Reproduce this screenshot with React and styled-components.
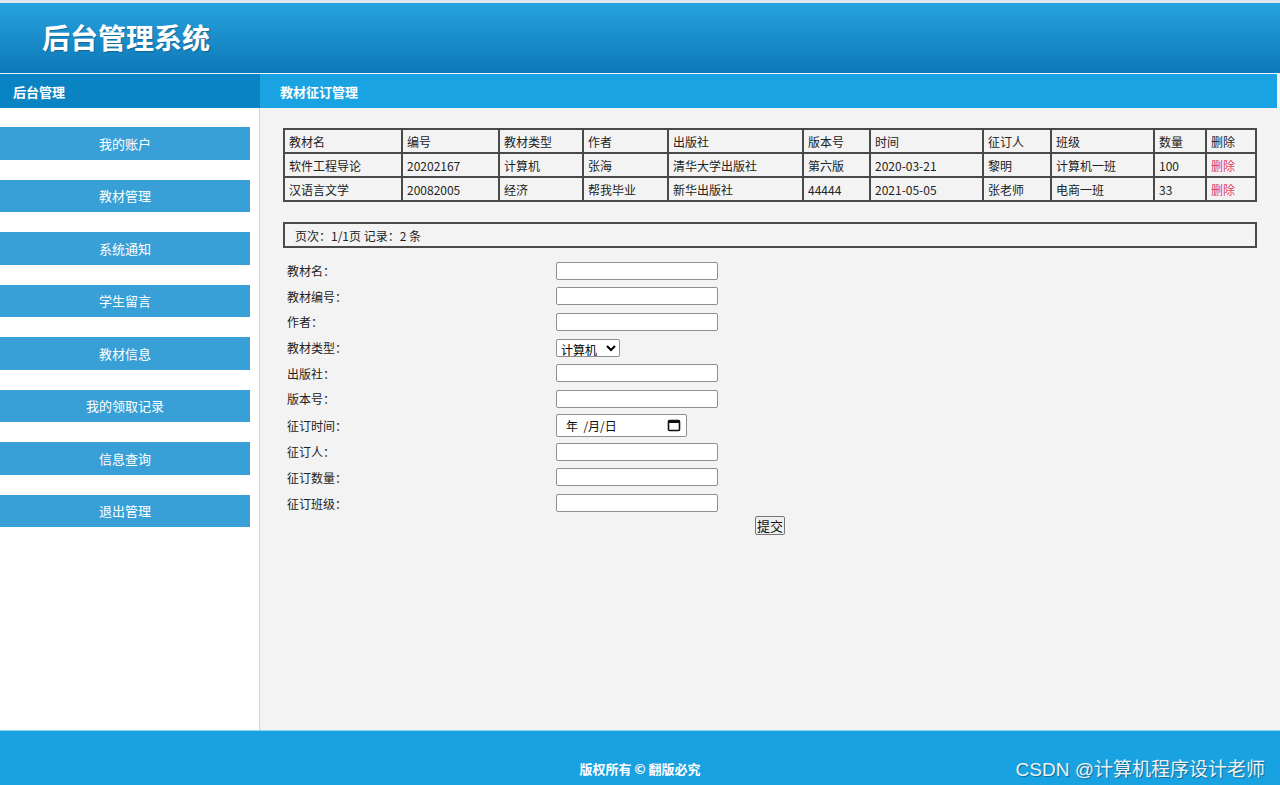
import React from "react";
import styled, { createGlobalStyle } from "styled-components";

const GlobalStyle = createGlobalStyle`
  body {
    margin: 0;
    font-family: "Noto Sans CJK SC", "Liberation Sans", sans-serif;
    background: #f3f3f3;
  }
`;

const menus = ["我的账户", "教材管理", "系统通知", "学生留言", "教材信息", "我的领取记录", "信息查询", "退出管理"];

const columns = [
  { title: "教材名", width: 118 },
  { title: "编号", width: 97 },
  { title: "教材类型", width: 84 },
  { title: "作者", width: 85 },
  { title: "出版社", width: 135 },
  { title: "版本号", width: 67 },
  { title: "时间", width: 113 },
  { title: "征订人", width: 68 },
  { title: "班级", width: 103 },
  { title: "数量", width: 52 },
  { title: "删除", width: 50 }
];

const rows = [
  ["软件工程导论", "20202167", "计算机", "张海", "清华大学出版社", "第六版", "2020-03-21", "黎明", "计算机一班", "100"],
  ["汉语言文学", "20082005", "经济", "帮我毕业", "新华出版社", "44444", "2021-05-05", "张老师", "电商一班", "33"]
];

const fields = [
  { label: "教材名：", type: "text" },
  { label: "教材编号：", type: "text" },
  { label: "作者：", type: "text" },
  { label: "教材类型：", type: "select" },
  { label: "出版社：", type: "text" },
  { label: "版本号：", type: "text" },
  { label: "征订时间：", type: "date" },
  { label: "征订人：", type: "text" },
  { label: "征订数量：", type: "text" },
  { label: "征订班级：", type: "text" }
];

const CalendarIcon = () => (
  <svg width="14" height="14" viewBox="0 0 14 14">
    <rect x="1.5" y="2.5" width="11" height="10" rx="1" fill="none" stroke="#111" strokeWidth="1.6" />
    <rect x="1.5" y="2.5" width="11" height="2.5" fill="#111" />
  </svg>
);

const App = () => {
  return (
    <Page>
      <GlobalStyle />
      <TopStrip />
      <Header>
        <Title>后台管理系统</Title>
      </Header>
      <SubBar>
        <SubLeft>后台管理</SubLeft>
        <SubRight>教材征订管理</SubRight>
      </SubBar>
      <Main>
        <Sidebar>
          {menus.map((m) => (
            <NavButton key={m}>{m}</NavButton>
          ))}
        </Sidebar>
        <Content>
          <DataTable>
            <colgroup>
              {columns.map((c) => (
                <col key={c.title} style={{ width: c.width }} />
              ))}
            </colgroup>
            <tbody>
              <tr>
                {columns.map((c) => (
                  <Cell key={c.title}>{c.title}</Cell>
                ))}
              </tr>
              {rows.map((r) => (
                <tr key={r[1]}>
                  {r.map((v, i) => (
                    <Cell key={i}>{v}</Cell>
                  ))}
                  <Cell>
                    <DeleteLink>删除</DeleteLink>
                  </Cell>
                </tr>
              ))}
            </tbody>
          </DataTable>
          <Pager>页次：1/1页 记录：2 条</Pager>
          <FormTable>
            <tbody>
              {fields.map((f) => (
                <FormRow key={f.label} $tall={f.type === "date"}>
                  <LabelCell>{f.label}</LabelCell>
                  <InputCell>
                    {f.type === "text" && <TextInput type="text" />}
                    {f.type === "select" && (
                      <Select defaultValue="计算机">
                        <option value="计算机">计算机</option>
                        <option value="经济">经济</option>
                      </Select>
                    )}
                    {f.type === "date" && (
                      <DateBox>
                        <span>年&nbsp;&nbsp;/月/日</span>
                        <CalendarIcon />
                      </DateBox>
                    )}
                  </InputCell>
                </FormRow>
              ))}
              <tr>
                <SubmitCell colSpan={2}>
                  <SubmitButton type="button">提交</SubmitButton>
                </SubmitCell>
              </tr>
            </tbody>
          </FormTable>
        </Content>
      </Main>
      <Footer>
        版权所有 © 翻版必究
        <Watermark>CSDN @计算机程序设计老师</Watermark>
      </Footer>
    </Page>
  );
};

export default App;

const Page = styled.div`
  width: 1280px;
  height: 785px;
  display: flex;
  flex-direction: column;
  overflow: hidden;
`;

const TopStrip = styled.div`
  height: 3px;
  background: #dfe8ee;
`;

const Header = styled.div`
  height: 70px;
  background: linear-gradient(#28a2de, #0c78b7);
  display: flex;
  align-items: center;
  padding-left: 42px;
  border-bottom: 1px solid #e8f4fb;
`;

const Title = styled.h1`
  margin: 0 0 2px;
  color: #fff;
  font-size: 28px;
  font-weight: bold;
  text-shadow: 1px 1px 1px rgba(0, 0, 0, 0.25);
`;

const SubBar = styled.div`
  height: 34px;
  display: flex;
  padding-right: 3px;
  background: #f3f3f3;
`;

const SubLeft = styled.div`
  width: 247px;
  flex-shrink: 0;
  padding-left: 13px;
  background: #0a83c3;
  color: #fff;
  font-size: 13px;
  font-weight: bold;
  display: flex;
  align-items: center;
`;

const SubRight = styled.div`
  flex: 1;
  padding-left: 20px;
  background: #19a3e2;
  color: #fff;
  font-size: 13px;
  font-weight: bold;
  display: flex;
  align-items: center;
`;

const Main = styled.div`
  flex: 1;
  display: flex;
  min-height: 0;
`;

const Sidebar = styled.div`
  width: 259px;
  flex-shrink: 0;
  background: #fff;
  border-right: 1px solid #d4d4d4;
  padding-top: 19px;
  display: flex;
  flex-direction: column;
  gap: 20px;
`;

const NavButton = styled.div`
  width: 250px;
  height: 32.5px;
  background: #38a0d6;
  color: #fff;
  font-size: 13px;
  display: flex;
  align-items: center;
  justify-content: center;
`;

const Content = styled.div`
  flex: 1;
  min-width: 0;
  background: #f3f3f3;
  padding: 20px 23px 0 23px;
`;

const DataTable = styled.table`
  width: 974px;
  table-layout: fixed;
  border-collapse: separate;
  border-spacing: 0;
  border: 1px solid #4a4a4a;
  font-size: 12px;
  color: #222;
`;

const Cell = styled.td`
  height: 22px;
  padding: 0 4px;
  border: 1px solid #4a4a4a;
  white-space: nowrap;
  overflow: hidden;
`;

const DeleteLink = styled.span`
  color: #e0405a;
`;

const Pager = styled.div`
  width: 974px;
  height: 26px;
  margin-top: 20px;
  box-sizing: border-box;
  border: 2px solid #4a4a4a;
  font-size: 12px;
  color: #222;
  display: flex;
  align-items: center;
  padding-left: 10px;
`;

const FormTable = styled.table`
  width: 974px;
  margin-top: 10px;
  border-collapse: collapse;
  font-size: 12px;
  color: #222;
`;

const FormRow = styled.tr`
  height: ${(p) => (p.$tall ? "27.5px" : "25.6px")};
`;

const LabelCell = styled.td`
  width: 269px;
  padding: 0 0 0 4px;
`;

const InputCell = styled.td`
  padding: 0;
`;

const TextInput = styled.input`
  display: block;
  width: 162px;
  height: 18px;
  box-sizing: border-box;
  border: 1px solid #8f8f8f;
  border-radius: 2px;
  background: #fff;
  margin: 0;
`;

const Select = styled.select`
  display: block;
  height: 18px;
  width: 64px;
  box-sizing: border-box;
  border: 1px solid #8f8f8f;
  border-radius: 2px;
  background: #fff;
  font-family: "Noto Sans CJK SC", sans-serif;
  font-size: 12px;
  padding: 0;
  margin: 0;
`;

const DateBox = styled.div`
  width: 131px;
  height: 23px;
  box-sizing: border-box;
  border: 1px solid #8f8f8f;
  border-radius: 2px;
  background: #fff;
  display: flex;
  align-items: center;
  justify-content: space-between;
  padding: 0 5px 0 9px;
  font-size: 12px;
  color: #111;
`;

const SubmitCell = styled.td`
  text-align: center;
  vertical-align: top;
  padding: 0;
  line-height: 0;
`;

const SubmitButton = styled.button`
  height: 19px;
  padding: 0 1px;
  font-family: "Noto Sans CJK SC", sans-serif;
  font-size: 13px;
  line-height: 1;
  border: 1px solid #767676;
  border-radius: 2px;
  background: #efefef;
  color: #111;
`;

const Footer = styled.div`
  height: 55px;
  box-sizing: border-box;
  position: relative;
  border-top: 1px solid #8ad3f2;
  background: #19a2e2;
  color: #fff;
  font-size: 13px;
  font-weight: bold;
  text-align: center;
  padding-top: 28px;
`;

const Watermark = styled.span`
  position: absolute;
  right: 15px;
  top: 23px;
  font-family: "Liberation Sans Narrow", "Liberation Sans", "Noto Sans CJK SC", sans-serif;
  font-size: 19px;
  font-weight: normal;
  color: #eef3f6;
  text-shadow: 1px 1px 1px rgba(0, 0, 0, 0.35);
`;
